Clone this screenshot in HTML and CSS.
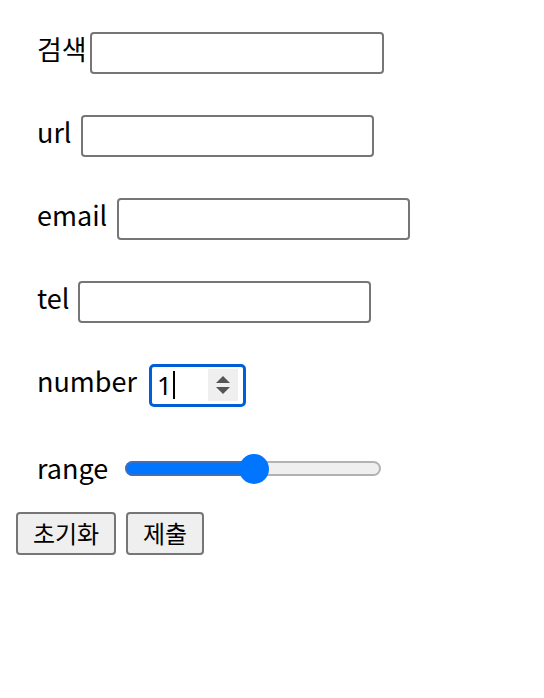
FILE: index.html
```html
<!DOCTYPE html>
<html lang="ko">
<head>
<meta charset="utf-8">
<link rel="stylesheet" href="styles.css">
</head>
<body>
<form class="form">
  <div class="row">
    <span class="label">검색</span><span class="field field-search"></span>
  </div>
  <div class="row">
    <span class="label">url</span><span class="field field-url"></span>
  </div>
  <div class="row">
    <span class="label">email</span><span class="field field-email"></span>
  </div>
  <div class="row">
    <span class="label">tel</span><span class="field field-tel"></span>
  </div>
  <div class="row">
    <span class="label">number</span>
    <span class="number">
      <span class="num-value">1</span><span class="caret"></span>
      <span class="spinner">
        <svg width="16" height="24" viewBox="0 0 16 24"><path d="M8 3 L15 10 L1 10 Z" fill="#555"/><path d="M1 14 L15 14 L8 21 Z" fill="#555"/></svg>
      </span>
    </span>
  </div>
  <div class="row row-range">
    <span class="label">range</span>
    <span class="range">
      <span class="range-fill"></span>
      <span class="range-thumb"></span>
    </span>
  </div>
  <div class="buttons">
    <span class="btn btn-reset">초기화</span>
    <span class="btn btn-submit">제출</span>
  </div>
</form>
</body>
</html>
```
FILE: styles.css
```css
* { box-sizing: border-box; }
html, body { margin: 0; padding: 0; background: #fff; }
body {
  font-family: "Noto Sans CJK KR", "Noto Sans", sans-serif;
  color: #000;
}
.form {
  padding: 32px 16px 0 16px;
  display: flex;
  flex-direction: column;
}
.row {
  display: flex;
  align-items: center;
  height: 42px;
  margin-bottom: 41px;
  padding-left: 21px;
}
.row-range { margin-bottom: 23px; }
.label {
  font-size: 27px;
  line-height: 1;
  padding-bottom: 9px;
  white-space: nowrap;
}
.row-range .label { padding-bottom: 2px; }
.field {
  display: block;
  width: 293px;
  height: 42px;
  border: 2px solid #767676;
  border-radius: 4px;
  background: #fff;
  margin-left: 9px;
}
.field-search { margin-left: 3px; width: 294px; }
.field-email { margin-left: 10px; }
.number {
  display: flex;
  align-items: center;
  width: 97px;
  height: 43px;
  margin-left: 12px;
  border: 3px solid #005fd6;
  border-radius: 5px;
  padding-left: 5px;
  padding-right: 5px;
}
.num-value {
  font-size: 26px;
  line-height: 1;
  font-family: "Noto Sans", sans-serif;
}
.caret {
  display: block;
  width: 2px;
  height: 28px;
  background: #000;
  margin-left: 1px;
}
.spinner {
  margin-left: auto;
  width: 30px;
  height: 32px;
  background: #efefef;
  display: flex;
  align-items: center;
  justify-content: center;
}
.range {
  display: block;
  position: relative;
  width: 256px;
  height: 15px;
  margin-left: 17px;
  margin-top: 1px;
  border: 2px solid #b2b2b2;
  background: #efefef;
  border-radius: 8px;
}
.range-fill {
  position: absolute;
  left: -2px;
  top: -2px;
  width: 132px;
  height: 15px;
  background: #0075ff;
  border: 2px solid #3b6fbf;
  border-right: none;
  border-radius: 8px 0 0 8px;
}
.range-thumb {
  position: absolute;
  left: 112px;
  top: -9px;
  width: 30px;
  height: 30px;
  border-radius: 50%;
  background: #0075ff;
}
.buttons {
  display: flex;
  gap: 10px;
}
.btn {
  display: flex;
  align-items: center;
  justify-content: center;
  height: 43px;
  border: 2px solid #767676;
  border-radius: 4px;
  background: #efefef;
  font-size: 24px;
  line-height: 1;
  padding-bottom: 2px;
  color: #000;
}
.btn-reset { width: 100px; }
.btn-submit { width: 78px; }
```
